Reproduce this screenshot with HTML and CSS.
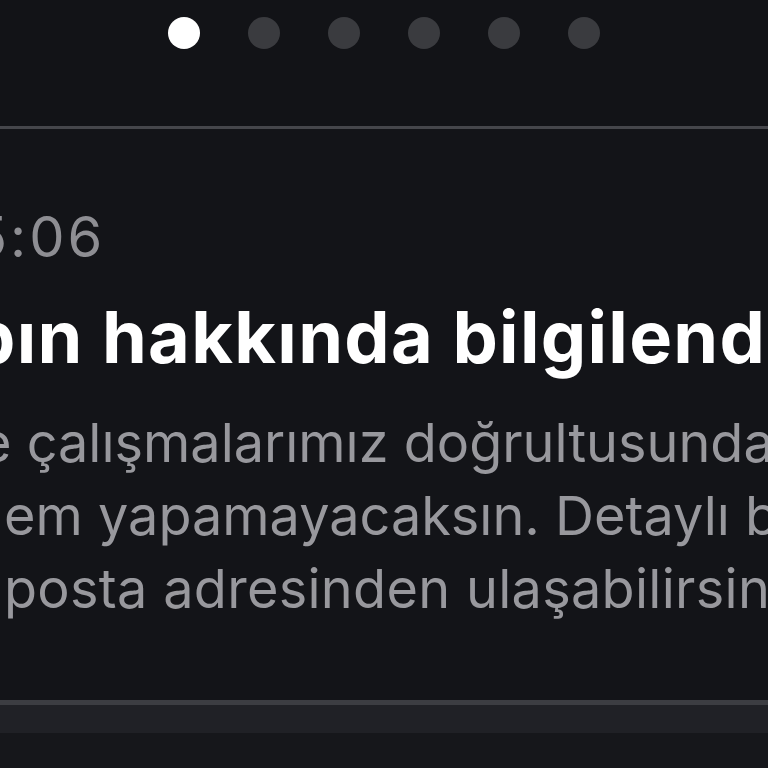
FILE: index.html
```html
<!DOCTYPE html>
<html lang="tr">
<head>
<meta charset="utf-8">
<link rel="stylesheet" href="styles.css">
</head>
<body>
<div class="screen">
  <div class="pager">
    <span class="dot active"></span>
    <span class="dot"></span>
    <span class="dot"></span>
    <span class="dot"></span>
    <span class="dot"></span>
    <span class="dot"></span>
  </div>
  <div class="card">
    <div class="time">5:06</div>
    <div class="title">bın hakkında bilgilendirme</div>
    <div class="body">
      <div class="line l1">e çalışmalarımız doğrultusunda</div>
      <div class="line l2">em yapamayacaksın. Detaylı bilgi</div>
      <div class="line l3">posta adresinden ulaşabilirsin.</div>
    </div>
  </div>
  <div class="footer">
    <div class="footer-band"></div>
  </div>
</div>
</body>
</html>
```

FILE: styles.css
```css
html, body {
  margin: 0;
  padding: 0;
  background: #121317;
}
.screen {
  width: 768px;
  height: 768px;
  overflow: hidden;
  display: flex;
  flex-direction: column;
  font-family: Inter, "Noto Sans", sans-serif;
}
.pager {
  height: 126px;
  flex: none;
  display: flex;
  justify-content: center;
  align-items: flex-start;
  gap: 48px;
  padding-top: 17px;
  box-sizing: border-box;
}
.dot {
  width: 32px;
  height: 32px;
  border-radius: 50%;
  background: #3a3b3f;
}
.dot.active {
  background: #ffffff;
}
.card {
  flex: none;
  border-top: 3px solid #45464b;
  background: #131418;
  height: 574px;
  box-sizing: border-box;
  padding-top: 78px;
  overflow: hidden;
  white-space: nowrap;
}
.time {
  color: #8e8e93;
  font-size: 56px;
  line-height: 60px;
  letter-spacing: 3px;
  text-indent: -27px;
}
.title {
  color: #ffffff;
  font-weight: 700;
  font-size: 72px;
  line-height: 80px;
  margin-top: 30px;
  letter-spacing: 1.3px;
  text-indent: -30px;
}
.body {
  margin-top: 29px;
  color: #98989d;
  font-size: 54px;
  line-height: 73px;
}
.l1 { text-indent: -20px; }
.l2 { text-indent: 4px; }
.l3 { text-indent: 4px; letter-spacing: 0.3px; }
.footer {
  flex: 1;
  border-top: 5px solid #3c3d42;
  background: #16171b;
}
.footer-band {
  height: 28px;
  background: #202126;
}
```
